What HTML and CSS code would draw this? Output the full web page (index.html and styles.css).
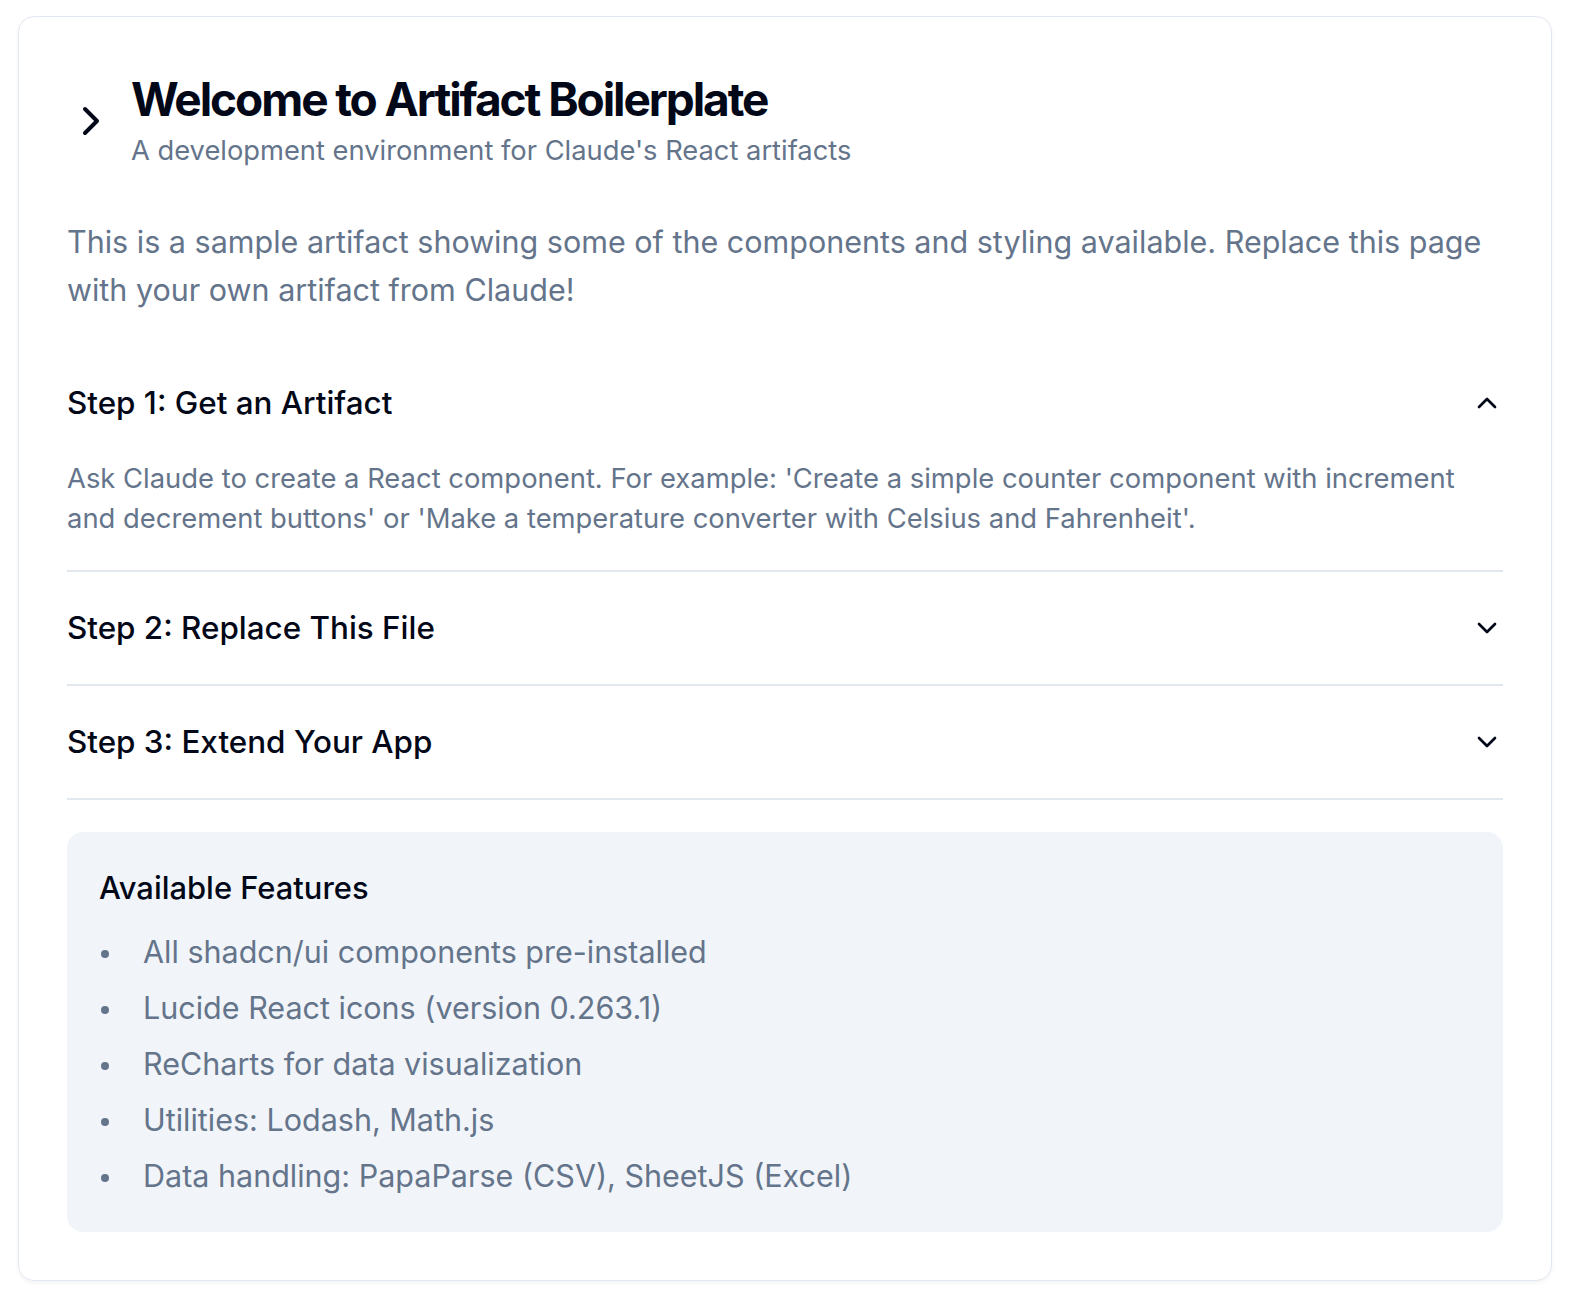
FILE: index.html
```html
<!DOCTYPE html>
<html lang="en">
<head>
<meta charset="utf-8">
<title>Artifact Boilerplate</title>
<link rel="stylesheet" href="styles.css">
</head>
<body>
<div class="page">
  <div class="card">
    <div class="card-header">
      <svg class="head-chevron" viewBox="0 0 24 24" fill="none" stroke="currentColor" stroke-width="2" stroke-linecap="round" stroke-linejoin="round"><path d="m9 18 6-6-6-6"/></svg>
      <div class="head-text">
        <h1 class="title">Welcome to Artifact Boilerplate</h1>
        <p class="subtitle">A development environment for Claude's React artifacts</p>
      </div>
    </div>
    <div class="card-content">
      <p class="intro">This is a sample artifact showing some of the components and styling available. Replace this page with your own artifact from Claude!</p>
      <div class="accordion">
        <div class="acc-item">
          <div class="acc-trigger">
            <span>Step 1: Get an Artifact</span>
            <svg class="acc-chevron" viewBox="0 0 24 24" fill="none" stroke="currentColor" stroke-width="2" stroke-linecap="round" stroke-linejoin="round"><path d="m18 15-6-6-6 6"/></svg>
          </div>
          <div class="acc-content">Ask Claude to create a React component. For example: 'Create a simple counter component with increment and decrement buttons' or 'Make a temperature converter with Celsius and Fahrenheit'.</div>
        </div>
        <div class="acc-item">
          <div class="acc-trigger">
            <span>Step 2: Replace This File</span>
            <svg class="acc-chevron" viewBox="0 0 24 24" fill="none" stroke="currentColor" stroke-width="2" stroke-linecap="round" stroke-linejoin="round"><path d="m6 9 6 6 6-6"/></svg>
          </div>
        </div>
        <div class="acc-item">
          <div class="acc-trigger">
            <span>Step 3: Extend Your App</span>
            <svg class="acc-chevron" viewBox="0 0 24 24" fill="none" stroke="currentColor" stroke-width="2" stroke-linecap="round" stroke-linejoin="round"><path d="m6 9 6 6 6-6"/></svg>
          </div>
        </div>
      </div>
      <div class="features">
        <h3 class="features-title">Available Features</h3>
        <ul class="features-list">
          <li>All shadcn/ui components pre-installed</li>
          <li>Lucide React icons (version 0.263.1)</li>
          <li>ReCharts for data visualization</li>
          <li>Utilities: Lodash, Math.js</li>
          <li>Data handling: PapaParse (CSV), SheetJS (Excel)</li>
        </ul>
      </div>
    </div>
  </div>
</div>
</body>
</html>
```
FILE: styles.css
```css
* { box-sizing: border-box; }
html, body { margin: 0; padding: 0; background: #ffffff; }
body {
  font-family: Inter, "Noto Sans", "Liberation Sans", sans-serif;
  color: #020817;
}
.page { padding: 16px 18px 16px 18px; }
.card {
  border: 1px solid #e2e8f0;
  border-radius: 16px;
  background: #fff;
  box-shadow: 0 2px 4px rgba(0,0,0,0.05);
}
.card-header {
  display: flex;
  align-items: center;
  gap: 16px;
  padding: 56px 48px 49px;
}
.head-chevron { width: 48px; height: 48px; flex: none; color: #020817; }
.head-text { display: flex; flex-direction: column; gap: 8px; }
.title {
  margin: 0;
  font-size: 46px;
  line-height: 52px;
  font-weight: 700;
  letter-spacing: -0.045em;
}
.subtitle { margin: 0; font-size: 27.3px; line-height: 36px; color: #64748b; }
.card-content { padding: 0 48px 48px; }
.intro { margin: 0 0 33px; font-size: 30.5px; line-height: 48px; color: #64748b; }
.acc-item { border-bottom: 2px solid #e2e8f0; }
.acc-trigger {
  display: flex; align-items: center; justify-content: space-between;
  padding: 32px 0; font-size: 31.4px; line-height: 48px; font-weight: 500;
}
.acc-chevron { width: 32px; height: 32px; flex: none; color: #020817; }
.acc-content { padding: 0 0 32px; font-size: 27.4px; line-height: 40px; color: #64748b; margin-top: -1px; }
.features {
  margin-top: 32px;
  background: #f1f5f9;
  border-radius: 16px;
  padding: 32px;
}
.features-title { margin: 0 0 16px; font-size: 30.9px; line-height: 48px; font-weight: 500; }
.features-list {
  margin: 0; padding: 0;
  list-style: none;
  font-size: 30.5px; line-height: 48px; color: #64748b;
  display: flex; flex-direction: column; gap: 8px;
}
.features-list li { display: flex; }
.features-list li::before {
  content: "";
  flex: none;
  width: 8px; height: 8px;
  border-radius: 50%;
  background: #64748b;
  margin: 22px 34px 0 2px;
}
```
